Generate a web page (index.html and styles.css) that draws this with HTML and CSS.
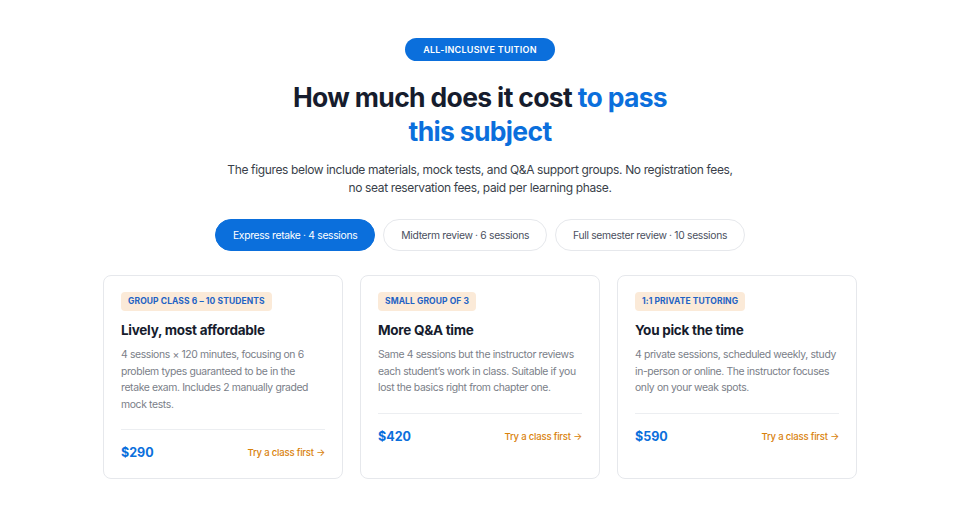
FILE: index.html
```html
<!DOCTYPE html>
<html lang="en">
<head>
  <meta charset="UTF-8">
  <title>Tuition pricing</title>
  <link rel="stylesheet" href="styles.css">
</head>
<body>

  <section class="pricing">
    <div class="eyebrow">ALL-INCLUSIVE TUITION</div>
    <h1>How much does it cost <span class="accent">to pass</span><br><span class="accent">this subject</span></h1>
    <p class="lead">The figures below include materials, mock tests, and Q&amp;A support groups. No registration fees, no seat reservation fees, paid per learning phase.</p>

    <div class="tabs">
      <button class="tab active">Express retake · 4 sessions</button>
      <button class="tab">Midterm review · 6 sessions</button>
      <button class="tab">Full semester review · 10 sessions</button>
    </div>

    <div class="cards">
      <div class="card">
        <span class="tag">GROUP CLASS 6 – 10 STUDENTS</span>
        <h3>Lively, most affordable</h3>
        <p class="desc">4 sessions × 120 minutes, focusing on 6 problem types guaranteed to be in the retake exam. Includes 2 manually graded mock tests.</p>
        <div class="card-foot">
          <span class="price">$290</span>
          <a class="try" href="#">Try a class first →</a>
        </div>
      </div>
      <div class="card">
        <span class="tag">SMALL GROUP OF 3</span>
        <h3>More Q&amp;A time</h3>
        <p class="desc">Same 4 sessions but the instructor reviews each student’s work in class. Suitable if you lost the basics right from chapter one.</p>
        <div class="card-foot">
          <span class="price">$420</span>
          <a class="try" href="#">Try a class first →</a>
        </div>
      </div>
      <div class="card">
        <span class="tag">1:1 PRIVATE TUTORING</span>
        <h3>You pick the time</h3>
        <p class="desc">4 private sessions, scheduled weekly, study in-person or online. The instructor focuses only on your weak spots.</p>
        <div class="card-foot">
          <span class="price">$590</span>
          <a class="try" href="#">Try a class first →</a>
        </div>
      </div>
    </div>
  </section>

</body>
</html>
```

FILE: styles.css
```css
body {
  font-family: Inter, "Noto Sans", sans-serif;
  background-color: #ffffff;
  color: #1f2430;
  margin: 0;
}
.pricing {
  max-width: 754px;
  margin: 0 auto;
  padding-top: 37px;
  text-align: center;
}
.eyebrow {
  display: inline-block;
  background-color: #0b6fdc;
  color: #fff;
  font-size: 9px;
  font-weight: 600;
  letter-spacing: 0.03em;
  padding: 0 18px;
  height: 23px;
  line-height: 23px;
  border-radius: 12px;
}
h1 {
  font-size: 26.5px;
  font-weight: 700;
  letter-spacing: -0.025em;
  line-height: 34px;
  color: #161c2d;
  margin: 19px auto 0;
}
h1 .accent {
  color: #0b6fdc;
}
.lead {
  font-size: 12px;
  letter-spacing: -0.03em;
  line-height: 17.5px;
  color: #3a3f4a;
  margin: 13px auto 0;
  max-width: 514px;
}
.tabs {
  display: flex;
  justify-content: center;
  gap: 8px;
  margin-top: 23px;
}
.tab {
  font-family: inherit;
  font-size: 10.3px;
  letter-spacing: -0.03em;
  color: #4b5060;
  background-color: #fff;
  border: 1px solid #e6e8ec;
  border-radius: 16px;
  height: 32px;
  padding: 0 17px;
  cursor: pointer;
}
.tab.active {
  background-color: #0b6fdc;
  border-color: #0b6fdc;
  color: #fff;
}
.cards {
  display: grid;
  grid-template-columns: repeat(3, 1fr);
  gap: 17px;
  margin-top: 24px;
  text-align: left;
}
.card {
  display: flex;
  flex-direction: column;
  align-items: flex-start;
  border: 1px solid #e6e8ec;
  border-radius: 8px;
  padding: 16px 17px 16px 17px;
}
.tag {
  background-color: #fbead8;
  color: #1f63c4;
  font-size: 8.5px;
  font-weight: 700;
  letter-spacing: 0.01em;
  height: 19px;
  line-height: 19px;
  padding: 0 7px;
  border-radius: 4px;
}
.card h3 {
  font-size: 13.5px;
  font-weight: 700;
  letter-spacing: -0.02em;
  color: #161c2d;
  margin: 9px 0 0;
  line-height: 20px;
}
.desc {
  font-size: 10.4px;
  letter-spacing: -0.035em;
  line-height: 16.5px;
  color: #7a7e88;
  margin: 7px 0 0;
}
.card-foot {
  align-self: stretch;
  display: flex;
  justify-content: space-between;
  align-items: center;
  border-top: 1px solid #eceef1;
  margin-top: 16px;
  padding-top: 14px;
  line-height: 18px;
}
.price {
  font-size: 12.5px;
  font-weight: 700;
  color: #0b6fdc;
}
.try {
  font-size: 9.5px;
  font-weight: 500;
  letter-spacing: -0.02em;
  color: #d9820b;
  text-decoration: none;
}
```
